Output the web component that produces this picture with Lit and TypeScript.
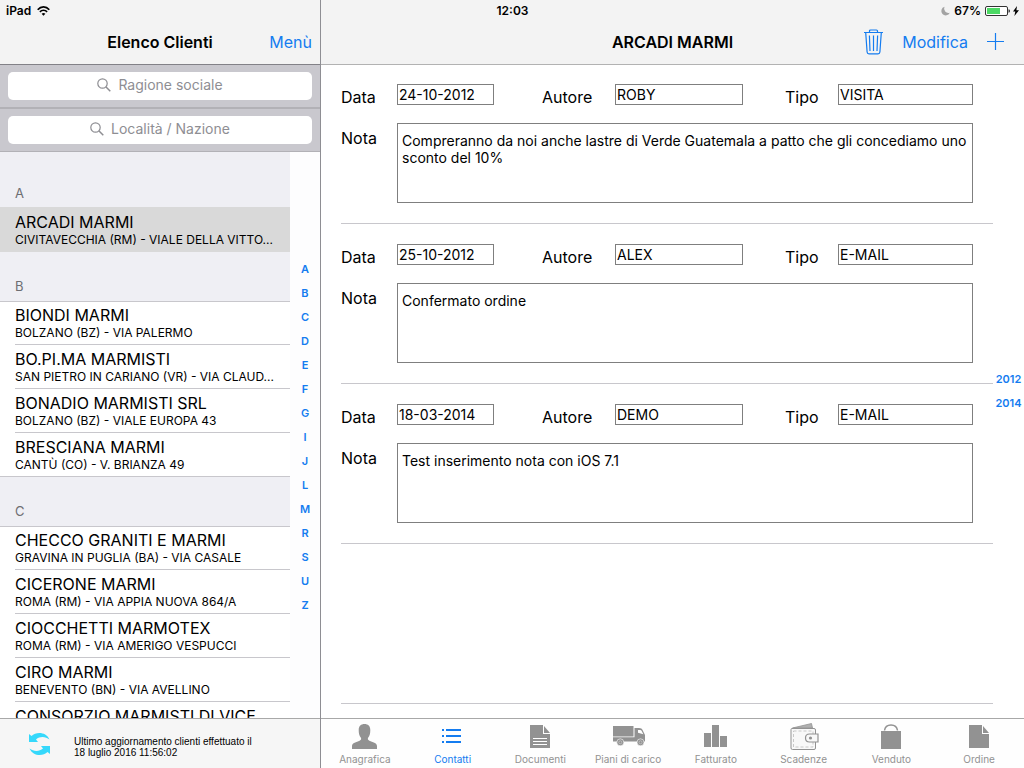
import { LitElement, html, svg, css, nothing } from "lit";
import { customElement, property, state } from "lit/decorators.js";
import { classMap } from "lit/directives/class-map.js";

interface Client {
  name: string;
  place: string;
}

interface Note {
  date: string;
  author: string;
  kind: string;
  text: string;
}

const SECTIONS: { letter: string; clients: Client[] }[] = [
  {
    letter: "A",
    clients: [{ name: "ARCADI MARMI", place: "CIVITAVECCHIA (RM) - VIALE DELLA VITTO..." }],
  },
  {
    letter: "B",
    clients: [
      { name: "BIONDI MARMI", place: "BOLZANO (BZ) - VIA PALERMO" },
      { name: "BO.PI.MA MARMISTI", place: "SAN PIETRO IN CARIANO (VR) - VIA CLAUD..." },
      { name: "BONADIO MARMISTI SRL", place: "BOLZANO (BZ) - VIALE EUROPA 43" },
      { name: "BRESCIANA MARMI", place: "CANTÙ (CO) - V. BRIANZA 49" },
    ],
  },
  {
    letter: "C",
    clients: [
      { name: "CHECCO GRANITI E MARMI", place: "GRAVINA IN PUGLIA (BA) - VIA CASALE" },
      { name: "CICERONE MARMI", place: "ROMA (RM) - VIA APPIA NUOVA 864/A" },
      { name: "CIOCCHETTI MARMOTEX", place: "ROMA (RM) - VIA AMERIGO VESPUCCI" },
      { name: "CIRO MARMI", place: "BENEVENTO (BN) - VIA AVELLINO" },
      { name: "CONSORZIO MARMISTI DI VICE", place: "" },
    ],
  },
];

const LETTERS = ["A", "B", "C", "D", "E", "F", "G", "I", "J", "L", "M", "R", "S", "U", "Z"];

const NOTES: Note[] = [
  {
    date: "24-10-2012",
    author: "ROBY",
    kind: "VISITA",
    text: "Compreranno da noi anche lastre di Verde Guatemala a patto che gli concediamo uno sconto del 10%",
  },
  { date: "25-10-2012", author: "ALEX", kind: "E-MAIL", text: "Confermato ordine" },
  { date: "18-03-2014", author: "DEMO", kind: "E-MAIL", text: "Test inserimento nota con iOS 7.1" },
];

const TABS = [
  {
    label: "Anagrafica",
    icon: svg`<path fill="currentColor" d="M3 27v-3c0-3.200 4.500-4 7.600-5.300 1.500-.700 1.900-1.700 1.300-2.900C10.300 13.900 9.700 11.400 9.700 8 9.700 4 12 2 15.500 2s5.800 2 5.800 6c0 3.400-.600 5.900-2.200 7.800-.600 1.200-.2 2.200 1.300 2.900C23.500 20 28 20.800 28 24v3z"/>`,
  },
  {
    label: "Contatti",
    icon: svg`<path fill="currentColor" d="M5 7h2v2H5zM9 7h15v2H9zM5 13h2v2H5zM9 13h15v2H9zM5 19h2v2H5zM9 19h15v2H9z"/>`,
  },
  {
    label: "Documenti",
    icon: svg`<path fill="currentColor" d="M6 3h13v9h7v14H6z"/><path fill="currentColor" d="M20 4l6 7h-6z"/><path stroke="#fff" d="M9 16.500h14M9 19.500h14M9 22.500h14"/>`,
  },
  {
    label: "Piani di carico",
    icon: svg`<path fill="currentColor" d="M1 4h20.500v10.500H1zM1 15.300h21.500V6H27c2 0 3 .7 3.800 2.500L33 13v6.500H1z"/><path fill="#fff" d="M26 8h2.200q1 0 1.500 1l1.600 3.300L26 10.800z"/><g fill="currentColor" stroke="#fff" stroke-width=".6"><circle cx="8.300" cy="20.300" r="3.500"/><circle cx="28.500" cy="20.300" r="3.500"/></g><g fill="none" stroke="#ccc" stroke-width=".7"><circle cx="8.300" cy="20.300" r="1.500"/><circle cx="28.500" cy="20.300" r="1.500"/></g>`,
  },
  {
    label: "Fatturato",
    icon: svg`<path fill="currentColor" d="M4 11h7v14H4zM12 3h7v22h-7zM20 14h7v11h-7z"/>`,
  },
  {
    label: "Scadenze",
    icon: svg`<path fill="#b0b0b0" stroke="currentColor" stroke-width=".8" d="M4.500 6L23.500 1.500l1 4.500z"/><path fill="#f8f8f8" stroke="currentColor" d="M4 6.500h22q1.500 0 1.500 1.500v18q0 1.500-1.500 1.500H4.500Q3 27.500 3 26V7.500q0-1 1-1z"/><path fill="none" stroke="#bbb" stroke-width=".8" stroke-dasharray="3 2" d="M5.500 9h19.500v16H5.500z"/><path fill="#f8f8f8" stroke="currentColor" stroke-width="1.200" d="M30 12v8h-8.500q-4 0-4-4t4-4z"/><circle cx="22.500" cy="16" r="1.600" fill="currentColor"/>`,
  },
  {
    label: "Venduto",
    icon: svg`<path fill="currentColor" d="M6 9h20v18H6z"/><path fill="none" stroke="currentColor" stroke-width="1.500" d="M9.500 8.500C10.500 1 21.500 1 22.500 8.500"/>`,
  },
  {
    label: "Ordine",
    icon: svg`<path fill="currentColor" d="M6 3h13v9h7v14H6z"/><path fill="currentColor" d="M20 4l6 7h-6z"/>`,
  },
];

const shared = css`
  :host {
    box-sizing: border-box;
    font-family: Inter, Roboto, "Liberation Sans", sans-serif;
    color: #000;
  }
  *,
  *::before {
    box-sizing: border-box;
  }
  button,
  input,
  textarea {
    font: inherit;
    color: inherit;
    margin: 0;
    padding: 0;
    border: 0;
    border-radius: 0;
    background: none;
    outline-offset: 2px;
  }
  a {
    color: inherit;
    text-decoration: none;
  }
  h1,
  h2,
  p,
  ul {
    margin: 0;
    padding: 0;
    list-style: none;
  }
  svg {
    display: block;
    flex: none;
    overflow: visible;
  }
  .bar {
    display: grid;
    grid-template-columns: 1fr auto 1fr;
    align-items: center;
    flex: none;
    height: 64px;
    padding-top: 20px;
    background: #f3f3f3;
  }
  .title {
    grid-column: 2;
    font-size: 16px;
    line-height: 20px;
    font-weight: 600;
  }
  .actions {
    justify-self: end;
    display: flex;
    align-items: center;
    color: #147cf0;
    font-size: 16px;
    line-height: 20px;
  }
`;

@customElement("status-bar")
class StatusBar extends LitElement {
  static styles = [
    shared,
    css`
      :host {
        display: grid;
        grid-template-columns: 1fr auto 1fr;
        align-items: center;
        height: 20px;
        padding: 1px 5px 0 6px;
        font-size: 12px;
        line-height: 16px;
        font-weight: 600;
      }
      .side {
        display: flex;
        align-items: center;
        gap: 6px;
      }
      .right {
        justify-content: flex-end;
        gap: 4px;
      }
    `,
  ];

  render() {
    return html`
      <div class="side">
        <span>iPad</span>
        <svg width="13" height="10" viewBox="0 0 13 10" fill="none" stroke="#000" stroke-width="1.700" aria-hidden="true">
          <path d="M.7 3.700C4-.1 9-.1 12.300 3.700M2.900 5.900c2-2.200 5.200-2.200 7.200 0" />
          <path d="M6.500 9.700L4.600 7.700q1.900-1.600 3.800 0z" fill="#000" stroke="none" />
        </svg>
      </div>
      <span>12:03</span>
      <div class="side right">
        <svg width="9" height="10" viewBox="0 0 9 10" aria-hidden="true">
          <path fill="#a3a3a3" d="M3.500 .8A4.400 4.400 0 1 0 8.800 6.700 4.300 4.300 0 0 1 3.500 .8z" />
        </svg>
        <span>67%</span>
        <svg width="34" height="10" viewBox="0 0 34 10" aria-hidden="true">
          <rect x=".5" y=".5" width="22" height="9" rx="1.500" fill="#fff" stroke="#333" />
          <path fill="#4cd964" d="M2 2h13v6H2z" />
          <path fill="#333" d="M23.500 3.200q1.500.3 1.500 1.800t-1.500 1.800z" />
          <path fill="#000" d="M32 0L28 5.600h2.300L29.400 10 34 4.200h-2.600z" />
        </svg>
      </div>
    `;
  }
}

@customElement("client-list")
class ClientList extends LitElement {
  @state() private selected = "ARCADI MARMI";

  static styles = [
    shared,
    css`
      :host {
        display: flex;
        flex-direction: column;
        min-height: 0;
        border-right: 1px solid #8e8e93;
      }
      .actions {
        padding-right: 8px;
      }
      .search {
        flex: none;
        padding: 7px 8px;
        background: #c9c8ce;
        border-top: 1px solid #b2b1b6;
        border-bottom: 1px solid #b2b1b6;
      }
      .search.first {
        border-top-color: #828187;
      }
      .field {
        display: flex;
        align-items: center;
        justify-content: center;
        gap: 7px;
        height: 28px;
        padding-bottom: 2px;
        border-radius: 5px;
        background: #fff;
        color: #8e8e93;
      }
      .field input {
        field-sizing: content;
        max-width: 80%;
        font-size: 14px;
        line-height: 20px;
      }
      .field input::placeholder {
        color: #8e8e93;
        opacity: 1;
      }
      .body {
        flex: 1;
        min-height: 0;
        display: flex;
      }
      .scroll {
        flex: 1;
        min-width: 0;
        overflow-y: auto;
        scrollbar-width: none;
      }
      .letter {
        display: flex;
        align-items: flex-end;
        height: 50px;
        padding: 0 15px 7px;
        background: #efeff4;
        border-bottom: 1px solid #c8c7cc;
        color: #6d6d72;
        font-size: 13px;
        line-height: 16px;
        font-weight: 400;
      }
      .section:first-child .letter {
        height: 57px;
      }
      .rows {
        margin-top: -1px;
      }
      .row {
        position: relative;
        display: flex;
        flex-direction: column;
        width: 100%;
        height: 44px;
        padding: 4px 15px 0;
        text-align: left;
        white-space: nowrap;
      }
      .row::before {
        content: "";
        position: absolute;
        left: 15px;
        right: 0;
        bottom: 0;
        border-bottom: 1px solid #c8c7cc;
      }
      .rows li:last-child .row::before {
        left: 0;
      }
      .row.on {
        background: #d9d9d9;
        box-shadow: 0 -1px 0 #d9d9d9;
      }
      .row.on::before {
        display: none;
      }
      .name {
        font-size: 16px;
        line-height: 20px;
      }
      .place {
        font-size: 12px;
        line-height: 16px;
      }
      .index {
        flex: none;
        width: 30px;
        display: flex;
        flex-direction: column;
        align-items: center;
        justify-content: center;
        padding-top: 4px;
        background: #fdfdfe;
        color: #147cf0;
        font-size: 11px;
        line-height: 24px;
        font-weight: 600;
      }
      .foot {
        flex: none;
        display: flex;
        align-items: center;
        gap: 22px;
        height: 50px;
        padding: 0 28px;
        border-top: 1px solid #a8a8a8;
        background: #f6f6f6;
        font-family: "Liberation Sans", Arial, sans-serif;
        font-size: 10px;
        line-height: 11px;
      }
      .foot p {
        white-space: nowrap;
        padding-top: 6px;
      }
    `,
  ];

  private field(label: string, first: boolean) {
    return html`
      <div class=${classMap({ search: true, first })}>
        <label class="field">
          <svg width="14" height="14" viewBox="0 0 14 14" fill="none" stroke="#8e8e93" stroke-width="1.200" aria-hidden="true">
            <circle cx="5.500" cy="5.500" r="4.700" />
            <path d="M9 9l4.300 4.300" stroke-width="1.500" />
          </svg>
          <input type="text" placeholder=${label} aria-label=${label} />
        </label>
      </div>
    `;
  }

  render() {
    return html`
      <header class="bar">
        <h1 class="title">Elenco Clienti</h1>
        <div class="actions"><button>Menù</button></div>
      </header>
      ${this.field("Ragione sociale", true)} ${this.field("Località / Nazione", false)}
      <div class="body">
        <div class="scroll">
          ${SECTIONS.map(
            (s) => html`
              <section class="section">
                <h2 class="letter">${s.letter}</h2>
                <ul class="rows">
                  ${s.clients.map(
                    (c) => html`
                      <li>
                        <button
                          class=${classMap({ row: true, on: c.name === this.selected })}
                          @click=${() => (this.selected = c.name)}
                        >
                          <span class="name">${c.name}</span>
                          <span class="place">${c.place}</span>
                        </button>
                      </li>
                    `
                  )}
                </ul>
              </section>
            `
          )}
        </div>
        <nav class="index" aria-label="Indice">${LETTERS.map((l) => html`<a href="#${l}">${l}</a>`)}</nav>
      </div>
      <footer class="foot">
        <svg width="24" height="24" viewBox="0 0 24 24" fill="#35d8fb" aria-hidden="true">
          <path d="M1 2l2.500 2C8-.5 18-.5 21.500 7.500 17.500 4.500 12 4 8 7.500L10 10H1z" />
          <path d="M22 22l-2.500-2C15 24.500 5 24.500 1.500 16.500 5.500 19.500 11 20 15 16.500L13 14h9z" />
        </svg>
        <p>Ultimo aggiornamento clienti effettuato il<br />18 luglio 2016 11:56:02</p>
      </footer>
    `;
  }
}

@customElement("note-card")
class NoteCard extends LitElement {
  @property({ attribute: false }) note?: Note;

  static styles = [
    shared,
    css`
      :host {
        display: block;
        height: 160px;
        padding: 20px 20px 0 0;
        border-bottom: 1px solid #c8c7cc;
      }
      .form {
        display: grid;
        grid-template-columns: 56px minmax(0, 97fr) 121px minmax(0, 128fr) 95px minmax(0, 135fr);
        row-gap: 16px;
        align-items: start;
      }
      label {
        font-size: 16px;
        line-height: 20px;
        padding-top: 3px;
      }
      .author {
        padding-left: 48px;
      }
      .kind {
        padding-left: 42px;
      }
      .note {
        padding-top: 5px;
      }
      input,
      textarea {
        width: 100%;
        border: 1px solid #7f7f7f;
        background: #fff;
        font-size: 14px;
      }
      input {
        height: 21px;
        padding: 0 1px 1px;
        line-height: 18px;
      }
      textarea {
        display: block;
        grid-column: 2 / -1;
        height: 80px;
        padding: 8px 0 8px 4px;
        line-height: 17px;
        resize: none;
        overflow: hidden;
      }
    `,
  ];

  render() {
    const n = this.note;
    if (!n) return nothing;
    return html`
      <div class="form">
        <label for="date">Data</label>
        <input id="date" type="text" .value=${n.date} />
        <label class="author" for="author">Autore</label>
        <input id="author" type="text" .value=${n.author} />
        <label class="kind" for="kind">Tipo</label>
        <input id="kind" type="text" .value=${n.kind} />
        <label class="note" for="text">Nota</label>
        <textarea id="text" .value=${n.text}></textarea>
      </div>
    `;
  }
}

@customElement("client-detail")
class ClientDetail extends LitElement {
  @state() private tab = "Contatti";

  static styles = [
    shared,
    css`
      :host {
        display: flex;
        flex-direction: column;
        min-width: 0;
        min-height: 0;
        background: #fff;
      }
      .bar {
        box-shadow: 0 1px 0 #b2b2b2;
        z-index: 1;
      }
      .actions {
        gap: 19px;
        padding-right: 20px;
      }
      .actions button {
        display: block;
      }
      .body {
        flex: 1;
        min-height: 0;
        display: flex;
        padding-left: 20px;
      }
      .notes {
        flex: 1;
        min-width: 0;
        overflow-y: auto;
        scrollbar-width: none;
      }
      .years {
        flex: none;
        width: 31px;
        display: flex;
        flex-direction: column;
        align-items: center;
        justify-content: center;
        color: #147cf0;
        font-size: 11px;
        line-height: 24px;
        font-weight: 600;
      }
      .tabs {
        flex: none;
        display: grid;
        grid-template-columns: repeat(8, minmax(0, 1fr));
        height: 50px;
        padding: 3px 1px 0 0;
        border-top: 1px solid #a8a8a8;
        background: #fefefe;
      }
      .tab {
        display: flex;
        flex-direction: column;
        align-items: center;
        gap: 3px;
        color: #929292;
        font-size: 10px;
        line-height: 12px;
        white-space: nowrap;
      }
      .tab.on {
        color: #147cf0;
      }
    `,
  ];

  render() {
    return html`
      <header class="bar">
        <h1 class="title">ARCADI MARMI</h1>
        <div class="actions">
          <button aria-label="Elimina">
            <svg width="19" height="25" viewBox="0 0 19 25" fill="none" stroke="currentColor" stroke-width="1.200">
              <path d="M0 2.500h19M5.500 2.500V1q0-1 1-1h6q1 0 1 1v1.500M1.700 2.500l1.400 19.500q.1 1.900 1.900 1.900h9q1.800 0 1.900-1.900l1.400-19.500" />
              <path d="M5.400 5.500l.6 15.500M9.500 5.500V21M13.600 5.500L13 21" />
            </svg>
          </button>
          <button>Modifica</button>
          <button aria-label="Aggiungi">
            <svg width="17" height="19" viewBox="0 0 17 19" stroke="currentColor" stroke-width="1.200">
              <path d="M8.500 0v17M0 8.500h17" />
            </svg>
          </button>
        </div>
      </header>
      <div class="body">
        <div class="notes">
          ${NOTES.map((n) => html`<note-card .note=${n}></note-card>`)}
          <note-card></note-card>
        </div>
        <nav class="years" aria-label="Anni"><a href="#2012">2012</a><a href="#2014">2014</a></nav>
      </div>
      <nav class="tabs">
        ${TABS.map(
          (t) => html`
            <button class=${classMap({ tab: true, on: t.label === this.tab })} @click=${() => (this.tab = t.label)}>
              <svg width="32" height="28" viewBox="0 0 32 28" aria-hidden="true">${t.icon}</svg>
              <span>${t.label}</span>
            </button>
          `
        )}
      </nav>
    `;
  }
}

@customElement("app-root")
class AppRoot extends LitElement {
  static styles = css`
    :host {
      display: grid;
      grid-template-columns: 321px minmax(0, 1fr);
      grid-template-rows: 20px minmax(0, 1fr);
      height: 100vh;
      overflow: hidden;
      background: #fff;
    }
    status-bar {
      grid-area: 1 / 1 / 2 / 3;
      z-index: 2;
    }
    client-list {
      grid-area: 1 / 1 / 3 / 2;
    }
    client-detail {
      grid-area: 1 / 2 / 3 / 3;
    }
  `;

  render() {
    return html`
      <status-bar></status-bar>
      <client-list></client-list>
      <client-detail></client-detail>
    `;
  }
}
